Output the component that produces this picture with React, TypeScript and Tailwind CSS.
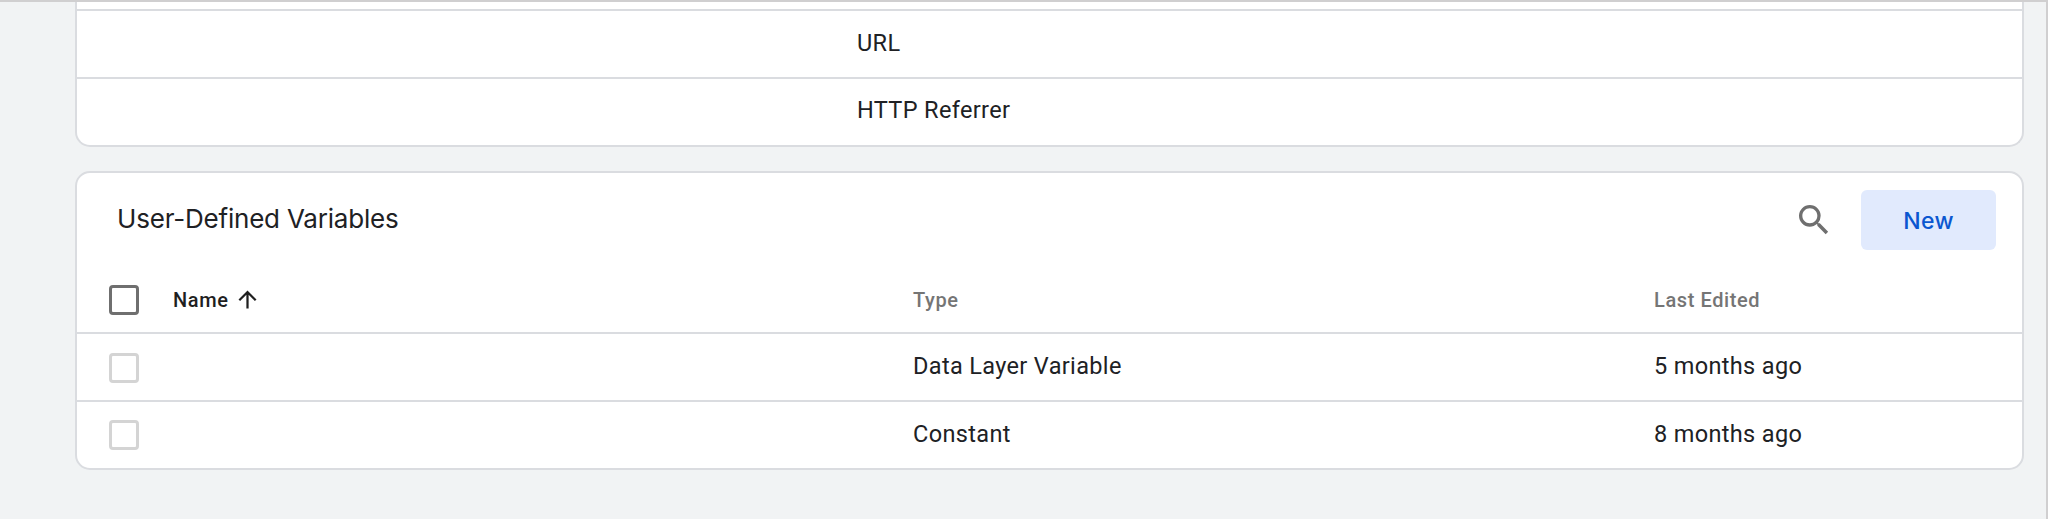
import React from "react";
import { MdArrowUpward, MdSearch } from "react-icons/md";

interface Variable {
  id: string;
  type: string;
  lastEdited: string;
}

const builtInTypes = ["URL", "HTTP Referrer"];

const variables: Variable[] = [
  { id: "1", type: "Data Layer Variable", lastEdited: "5 months ago" },
  { id: "2", type: "Constant", lastEdited: "8 months ago" },
];

const Checkbox: React.FC<{ muted?: boolean }> = ({ muted }) => (
  <span
    role="checkbox"
    aria-checked={false}
    className={
      muted
        ? "mt-[2px] block size-[30px] rounded-[4px] border-3 border-[#d4d4d4]"
        : "mt-[2px] block size-[30px] rounded-[4px] border-3 border-[#6f6f6f]"
    }
  />
);

const BuiltInVariables: React.FC = () => (
  <section className="h-[145px] overflow-hidden rounded-b-[15px] border-2 border-t-0 border-[#dadce0] bg-white pt-[7px]">
    {builtInTypes.map((type) => (
      <div
        key={type}
        className="flex h-[67.5px] items-center border-t-2 border-[#dadce0] pl-[780px] pb-[2px]"
      >
        {type}
      </div>
    ))}
  </section>
);

const UserDefinedVariables: React.FC = () => (
  <section className="h-[299px] overflow-hidden rounded-[15px] border-2 border-[#dadce0] bg-white">
    {/* Toolbar */}
    <div className="flex h-[93px] items-start pl-10 pr-[26px] pt-[17px]">
      <h2 className="pt-[9px] font-['Inter'] text-[26px] leading-[40px] font-normal tracking-[-0.2px]">
        User-Defined Variables
      </h2>
      <MdSearch className="ml-auto mt-[10px] size-10 text-[#6f6f6f]" />
      <button className="ml-[27px] h-[60px] w-[135px] rounded-[6px] bg-[#e1eafd] pt-[2px] font-['Inter'] text-[23px] font-medium text-[#0b57d0]">
        New
      </button>
    </div>
    {/* Column headings */}
    <div className="grid h-[66px] grid-cols-[64px_740px_741px_1fr] items-center pl-8 text-[20px] font-medium tracking-[0.6px] text-[#757575]">
      <Checkbox />
      <span className="flex items-center pt-px text-[#1f1f1f]">
        Name
        <MdArrowUpward className="ml-[5px] mb-px size-[27px]" />
      </span>
      <span className="pt-px">Type</span>
      <span className="pt-px">Last Edited</span>
    </div>
    {variables.map((variable) => (
      <div
        key={variable.id}
        className="grid h-[67.5px] grid-cols-[64px_740px_741px_1fr] items-center border-t-2 border-[#dadce0] pl-8"
      >
        <Checkbox muted />
        <span />
        <span className="pb-px">{variable.type}</span>
        <span className="pb-px">{variable.lastEdited}</span>
      </div>
    ))}
  </section>
);

const App: React.FC = () => {
  return (
    <div className="flex h-[519px] w-[2048px] flex-col gap-6 overflow-hidden border-t-2 border-r-2 border-[#d0cfd0] bg-[#f1f3f4] pl-[75px] pr-[22px] font-['Roboto',sans-serif] text-[23.5px] leading-[32px] tracking-[0.35px] text-[#202124]">
      <BuiltInVariables />
      <UserDefinedVariables />
    </div>
  );
};

export default App;
